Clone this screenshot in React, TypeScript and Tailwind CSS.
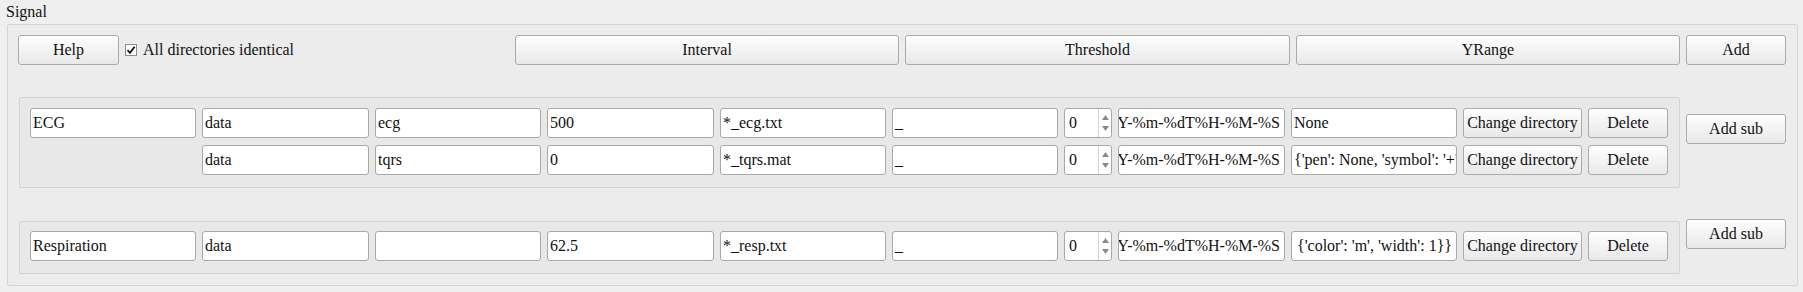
import React from 'react';

function Field({ w, text, clipStart = false }: { w: string; text: string; clipStart?: boolean }) {
  return (
    <div
      className={`${w} h-[30px] shrink-0 bg-white border border-[#a9a9a9] rounded-[3px] flex items-center overflow-hidden whitespace-nowrap text-[16px] text-[#111] ${
        clipStart ? 'justify-end pr-[4px]' : 'pl-[2px]'
      }`}
    >
      <span className="shrink-0">{text}</span>
    </div>
  );
}

function Btn({ w, label }: { w: string; label: string }) {
  return (
    <button className={`${w} h-[30px] shrink-0 rounded-[3px] border border-[#ababab] bg-gradient-to-b from-[#fefefe] to-[#e9e9e9] text-[16px] text-[#111] flex items-center justify-center whitespace-nowrap`}>
      {label}
    </button>
  );
}

function Spin() {
  return (
    <div className="w-[48px] h-[30px] shrink-0 bg-white border border-[#a9a9a9] rounded-[3px] flex text-[16px] text-[#111]">
      <div className="flex-1 flex items-center pl-[4px]">0</div>
      <div className="w-[13px] border-l border-[#d4d4d4] flex flex-col items-center justify-center gap-[6px]">
        <svg width="7" height="5" viewBox="0 0 7 5">
          <path d="M0 5 L3.5 0 L7 5 Z" fill="#8a8a8a" />
        </svg>
        <svg width="7" height="5" viewBox="0 0 7 5">
          <path d="M0 0 L3.5 5 L7 0 Z" fill="#8a8a8a" />
        </svg>
      </div>
    </div>
  );
}

type Row = {
  name?: string;
  dir: string;
  sub: string;
  rate: string;
  pattern: string;
  opts: string;
  optsClipStart?: boolean;
};

function SignalRow({ r }: { r: Row }) {
  return (
    <div className="flex gap-[6px]">
      {r.name !== undefined ? <Field w="w-[166px]" text={r.name} /> : <div className="w-[166px] shrink-0" />}
      <Field w="w-[167px]" text={r.dir} />
      <Field w="w-[166px]" text={r.sub} />
      <Field w="w-[167px]" text={r.rate} />
      <Field w="w-[166px]" text={r.pattern} />
      <Field w="w-[166px]" text="_" />
      <Spin />
      <Field w="w-[167px]" text="%Y-%m-%dT%H-%M-%S" clipStart />
      <Field w="w-[166px]" text={r.opts} clipStart={r.optsClipStart} />
      <Btn w="w-[119px]" label="Change directory" />
      <Btn w="w-[80px]" label="Delete" />
    </div>
  );
}

export default function App() {
  return (
    <div className="w-[1803px] h-[292px] bg-[#efefef] overflow-hidden font-['Liberation_Serif','Times_New_Roman',serif]">
      <div className="pl-[6px] pt-[2px] h-[24px] text-[16px] text-[#111] leading-[20px]">Signal</div>

      <div className="ml-[7px] w-[1791px] h-[262px] border border-[#d5d5d5] rounded-[2px] bg-[#ececec] pl-[10px] pr-[11px] pt-[10px]">
        {/* toolbar */}
        <div className="flex items-center gap-[6px]">
          <Btn w="w-[101px]" label="Help" />
          <label className="flex items-center gap-[6px] text-[16px] text-[#111]">
            <span className="w-[12px] h-[12px] bg-white border border-[#8c8c8c] flex items-center justify-center">
              <svg width="10" height="10" viewBox="0 0 10 10">
                <path d="M1.5 5.2 L4 7.8 L8.6 1.8" stroke="#111" strokeWidth="1.8" fill="none" />
              </svg>
            </span>
            All directories identical
          </label>
          <div className="flex-1" />
          <Btn w="w-[384px]" label="Interval" />
          <Btn w="w-[385px]" label="Threshold" />
          <Btn w="w-[384px]" label="YRange" />
          <Btn w="w-[100px]" label="Add" />
        </div>

        {/* ECG */}
        <div className="mt-[32px] flex items-start gap-[6px]">
          <div className="ml-px w-[1661px] h-[91px] border border-[#d3d3d3] rounded-[2px] bg-[#e8e8e8] pl-[10px] pt-[10px] flex flex-col gap-[7px]">
            <SignalRow r={{ name: 'ECG', dir: 'data', sub: 'ecg', rate: '500', pattern: '*_ecg.txt', opts: 'None' }} />
            <SignalRow
              r={{ dir: 'data', sub: 'tqrs', rate: '0', pattern: '*_tqrs.mat', opts: "{'pen': None, 'symbol': '+', 'symbolSize': 10}" }}
            />
          </div>
          <div className="mt-[17px]">
            <Btn w="w-[100px]" label="Add sub" />
          </div>
        </div>

        {/* Respiration */}
        <div className="mt-[31px] flex items-start gap-[6px]">
          <div className="mt-[2px] ml-px w-[1661px] h-[53px] border border-[#d3d3d3] rounded-[2px] bg-[#e8e8e8] pl-[10px] pt-[9px]">
            <SignalRow
              r={{
                name: 'Respiration',
                dir: 'data',
                sub: '',
                rate: '62.5',
                pattern: '*_resp.txt',
                opts: "{'pen': {'color': 'm', 'width': 1}}",
                optsClipStart: true,
              }}
            />
          </div>
          <Btn w="w-[100px]" label="Add sub" />
        </div>
      </div>
    </div>
  );
}
